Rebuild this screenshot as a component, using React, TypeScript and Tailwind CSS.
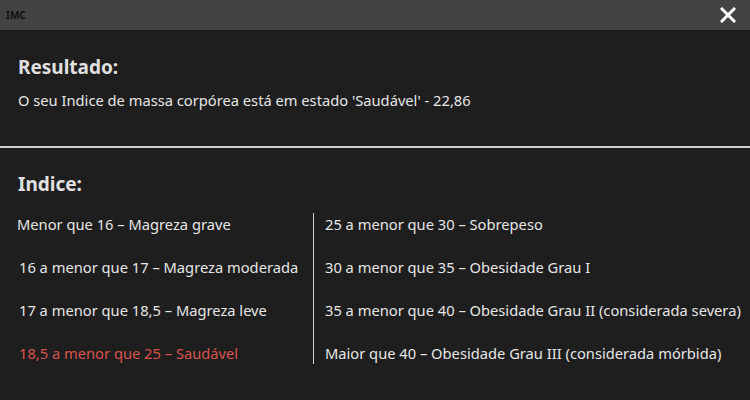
const left = [
  { text: "Menor que 16 – Magreza grave", cls: "pl-[17px] text-[#e6e6e6]" },
  { text: "16 a menor que 17 – Magreza moderada", cls: "pl-[19px] text-[#e6e6e6]" },
  { text: "17 a menor que 18,5 – Magreza leve", cls: "pl-[19px] text-[#e6e6e6]" },
  { text: "18,5 a menor que 25 – Saudável", cls: "pl-[19px] text-[#d9534f]" },
];

const right = [
  "25 a menor que 30 – Sobrepeso",
  "30 a menor que 35 – Obesidade Grau I",
  "35 a menor que 40 – Obesidade Grau II (considerada severa)",
  "Maior que 40 – Obesidade Grau III (considerada mórbida)",
];

export default function App() {
  return (
    <div className="w-[750px] h-[400px] bg-[#1e1e1e] text-[#e6e6e6] font-['Noto_Sans',sans-serif] overflow-hidden">
      {/* Title bar */}
      <div className="h-[30px] bg-[#434343] flex items-center justify-between pl-[6px] pr-[14px]">
        <span className="text-[10px] font-bold text-[#111]">IMC</span>
        <svg width="16" height="16" viewBox="0 0 16 16" className="text-white">
          <path d="M2 2 L14 14 M14 2 L2 14" stroke="currentColor" strokeWidth="3" strokeLinecap="square" />
        </svg>
      </div>

      {/* Resultado */}
      <div className="px-[18px] pt-[25px] pb-[36px]">
        <h2 className="text-[19px] leading-[24px] font-bold text-[#e0e0e0]">Resultado:</h2>
        <p className="mt-[11px] text-[14.7px] leading-[20px]">
          O seu Indice de massa corpórea está em estado 'Saudável' - 22,86
        </p>
      </div>

      <div className="h-[2px] bg-[#cfcfcf]" />

      {/* Indice */}
      <div className="pt-[24px]">
        <h2 className="px-[18px] text-[19px] leading-[24px] font-bold text-[#e0e0e0]">Indice:</h2>
        <div className="mt-[17px] flex">
          <div className="w-[314px] border-r-[1.5px] border-[#cfcfcf] flex flex-col gap-[23px] py-[1px]">
            {left.map((l) => (
              <div key={l.text} className={`text-[14.7px] leading-[20px] ${l.cls}`}>
                {l.text}
              </div>
            ))}
          </div>
          <div className="pl-[11px] flex flex-col gap-[23px] py-[1px]">
            {right.map((r) => (
              <div key={r} className="text-[14.7px] leading-[20px] whitespace-nowrap">
                {r}
              </div>
            ))}
          </div>
        </div>
      </div>
    </div>
  );
}
